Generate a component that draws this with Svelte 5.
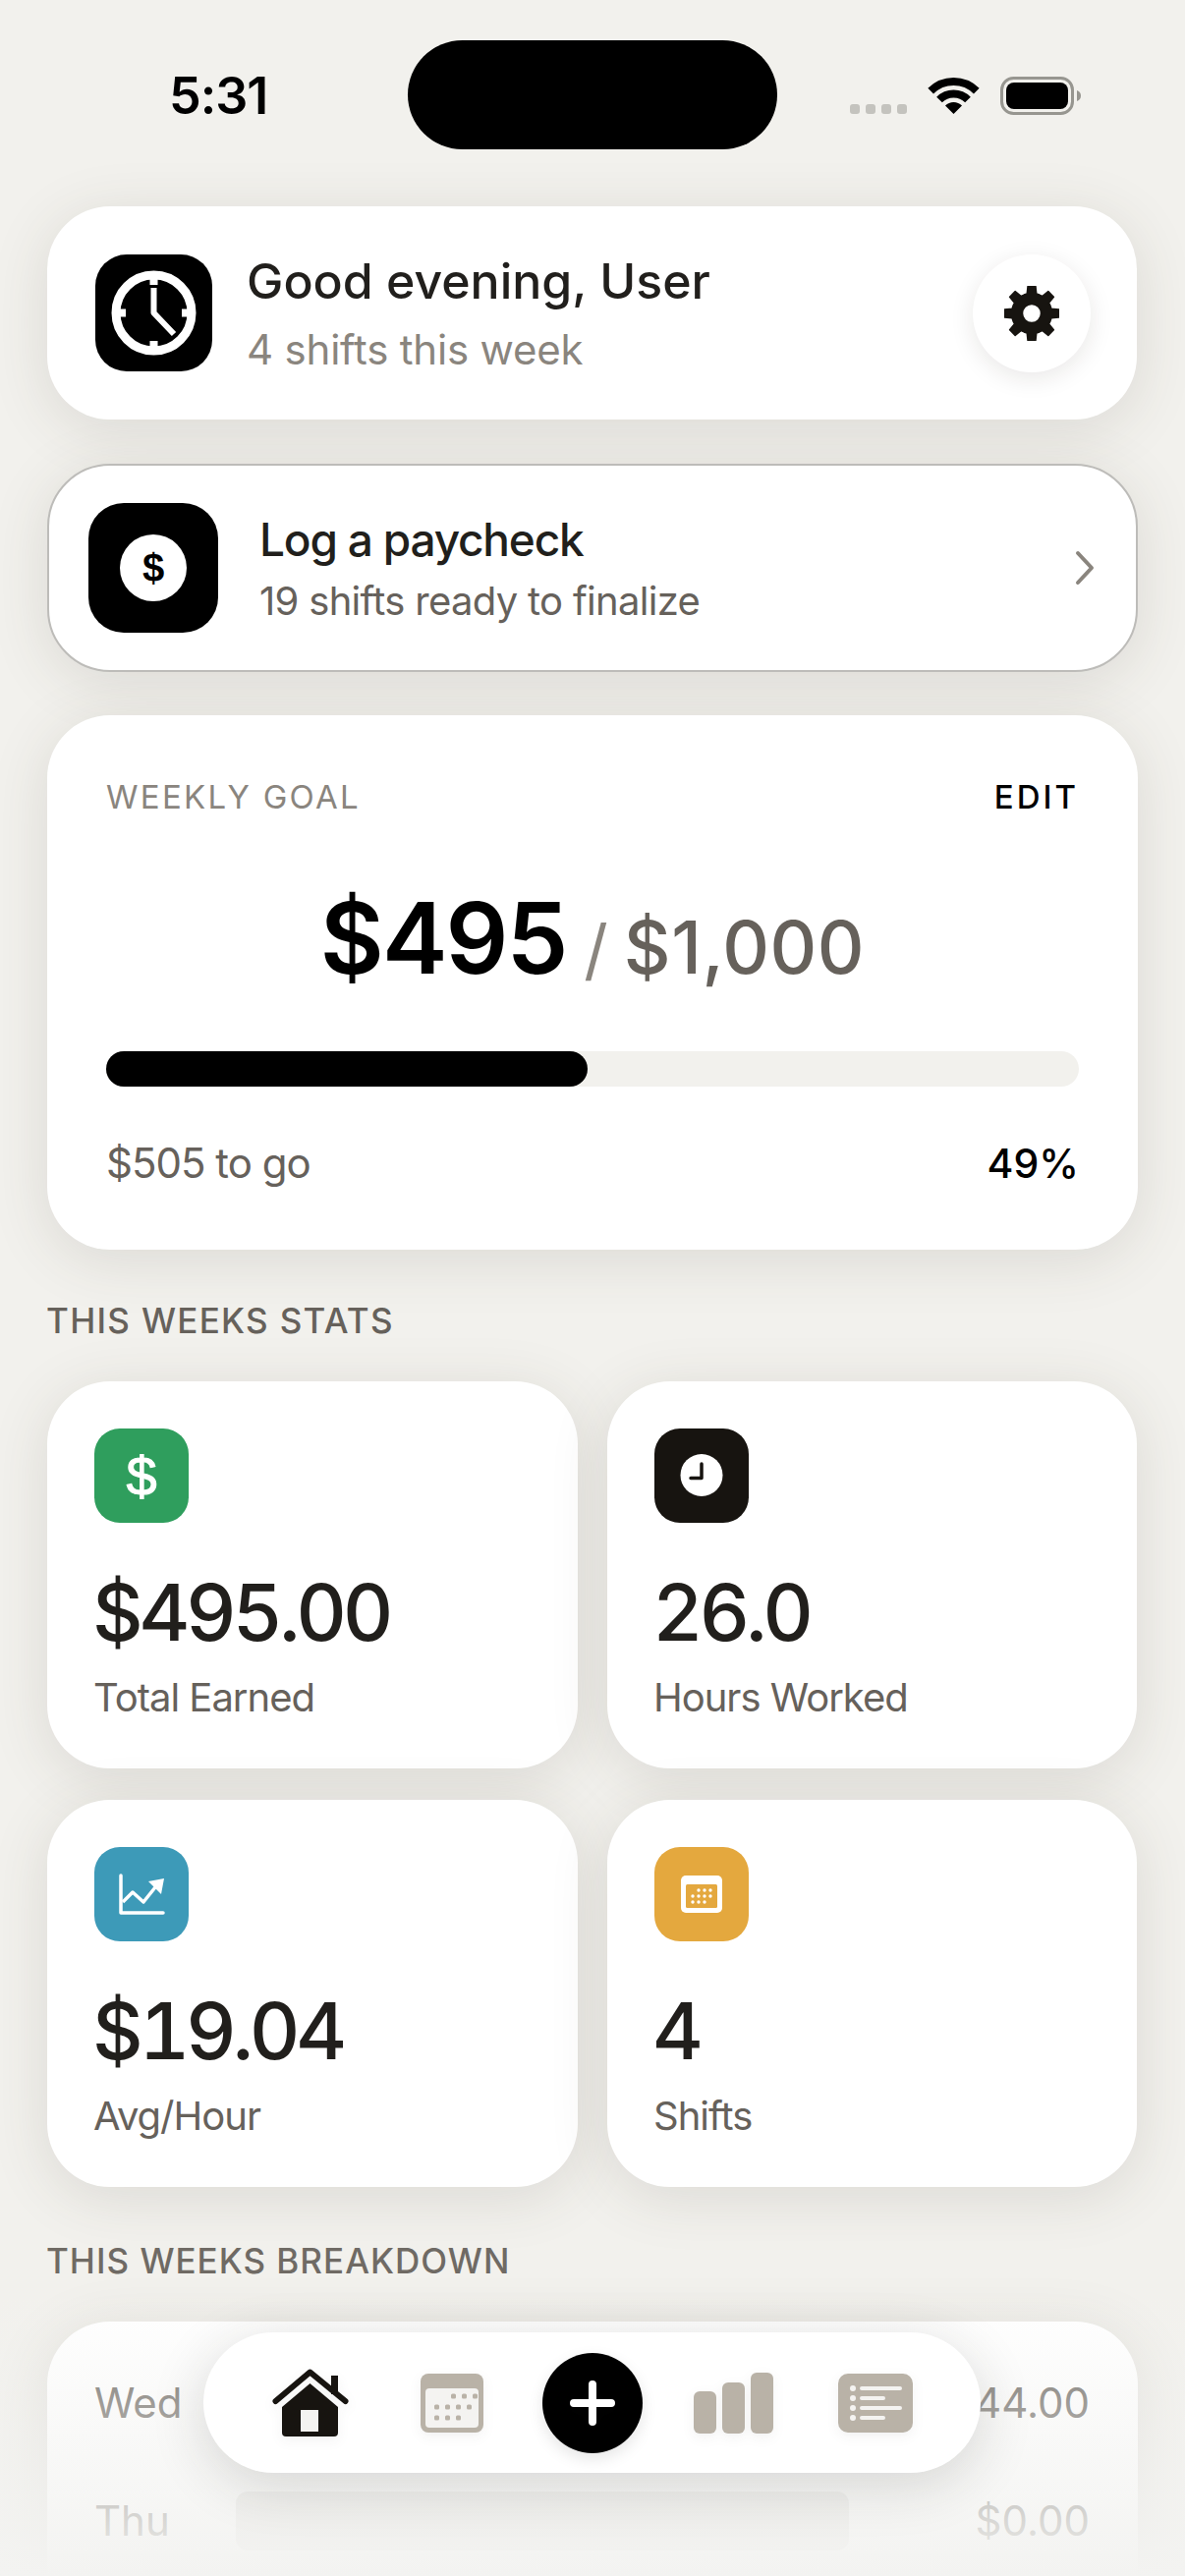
<script>
  const stats = [
    { value: '$495.00', label: 'Total Earned', color: '#2f9e5d', kind: 'dollar' },
    { value: '26.0', label: 'Hours Worked', color: '#171410', kind: 'clock' },
    { value: '$19.04', label: 'Avg/Hour', color: '#3d9ab8', kind: 'chart' },
    { value: '4', label: 'Shifts', color: '#e4a83e', kind: 'calendar' }
  ];

  const breakdown = [
    { day: 'Wed', amount: '$144.00', pct: 29 },
    { day: 'Thu', amount: '$0.00', pct: 0 }
  ];

  const goal = { earned: 495, target: 1000 };
  const progress = (goal.earned / goal.target) * 100;

  // calendar dot rows for the nav icon: [x, y]
  const navDots = [
    [33, 23], [44, 23], [55, 23],
    [16, 34], [27, 34], [38, 34], [49, 34],
    [16, 45], [27, 45], [38, 45]
  ];
  const statDots = [
    [17, 15], [23, 15], [29, 15],
    [11, 21], [17, 21], [23, 21], [29, 21],
    [11, 27], [17, 27], [23, 27]
  ];

  function gearPath(cx, cy, outer, inner, hole, teeth) {
    const step = (Math.PI * 2) / teeth;
    let d = '';
    for (let i = 0; i < teeth; i++) {
      const a = i * step - Math.PI / 2;
      const pts = [
        [inner, a - step * 0.5],
        [inner, a - step * 0.3],
        [outer, a - step * 0.18],
        [outer, a + step * 0.18],
        [inner, a + step * 0.3]
      ];
      for (const [r, t] of pts) {
        d += `${d ? 'L' : 'M'}${(cx + r * Math.cos(t)).toFixed(2)} ${(cy + r * Math.sin(t)).toFixed(2)}`;
      }
    }
    d += `Z M${cx + hole} ${cy} A${hole} ${hole} 0 1 0 ${cx - hole} ${cy} A${hole} ${hole} 0 1 0 ${cx + hole} ${cy}Z`;
    return d;
  }
</script>

<div class="screen">
  <div class="status">
    <span class="time">5:31</span>
    <div class="island"></div>
    <svg class="status-icons" width="236" height="40" viewBox="0 0 236 40">
      <rect x="0" y="28" width="10" height="10" rx="3" fill="#c4c3be" />
      <rect x="16" y="28" width="10" height="10" rx="3" fill="#c4c3be" />
      <rect x="32" y="28" width="10" height="10" rx="3" fill="#c4c3be" />
      <rect x="48" y="28" width="10" height="10" rx="3" fill="#c4c3be" />
      <path d="M82.2 14.7A33 33 0 0 1 128.8 14.7" fill="none" stroke="#000" stroke-width="8" />
      <path d="M91 23.5A20.5 20.5 0 0 1 120 23.5" fill="none" stroke="#000" stroke-width="8" />
      <path d="M105.500 38L97 29.500A12 12 0 0 1 114 29.500Z" fill="#000" />
      <rect x="154.500" y="1.500" width="72" height="36" rx="12" fill="none" stroke="#979690" stroke-width="3" />
      <rect x="159" y="6" width="63" height="27" rx="8" fill="#000" />
      <path d="M231 14C234 15 235 17 235 19.500C235 22 234 24 231 25Z" fill="#979690" />
    </svg>
  </div>

  <main class="content">
    <section class="card header-card">
      <div class="app-icon">
        <svg width="119" height="119" viewBox="0 0 119 119" fill="none" stroke="#fff">
          <circle cx="59.500" cy="59.500" r="38.500" stroke-width="9" />
          <path d="M59.500 22V31M59.500 88V97M22 59.500H31M88 59.500H97" stroke-width="8" />
          <path d="M59.500 34V59.500L80 81" stroke-width="6" stroke-linejoin="round" />
        </svg>
      </div>
      <div class="header-text">
        <div class="greeting">Good evening, User</div>
        <div class="subtitle">4 shifts this week</div>
      </div>
      <button class="gear-btn" aria-label="Settings">
        <svg width="56" height="56" viewBox="0 0 56 56">
          <path d={gearPath(28, 28, 28, 20.5, 9.5, 8)} fill="#171410" fill-rule="evenodd" stroke="#171410" stroke-width="1.500" stroke-linejoin="round" />
        </svg>
      </button>
    </section>

    <section class="card paycheck-card">
      <div class="pay-icon">
        <div class="pay-coin">$</div>
      </div>
      <div class="pay-text">
        <div class="pay-title">Log a paycheck</div>
        <div class="pay-sub">19 shifts ready to finalize</div>
      </div>
      <svg class="chevron" width="20" height="36" viewBox="0 0 20 36" fill="none">
        <path d="M3 3L17 18L3 33" stroke="#8a857e" stroke-width="4" stroke-linecap="round" stroke-linejoin="round" />
      </svg>
    </section>

    <section class="card goal-card">
      <div class="goal-head">
        <span class="goal-label">WEEKLY GOAL</span>
        <span class="goal-edit">EDIT</span>
      </div>
      <div class="goal-amount">
        <span class="earned">$495</span>
        <span class="slash">/</span>
        <span class="target">$1,000</span>
      </div>
      <div class="track">
        <div class="fill" style="width: {progress.toFixed(1)}%"></div>
      </div>
      <div class="goal-foot">
        <span class="to-go">$505 to go</span>
        <span class="pct">49%</span>
      </div>
    </section>

    <h2 class="section-label">THIS WEEKS STATS</h2>

    <section class="stats-grid">
      {#each stats as stat}
        <div class="card stat-card">
          <div class="stat-icon" style="background-color: {stat.color}">
            {#if stat.kind === 'dollar'}
              <span class="stat-dollar">$</span>
            {:else if stat.kind === 'clock'}
              <svg width="96" height="96" viewBox="0 0 96 96">
                <circle cx="48" cy="47.500" r="21.500" fill="#fff" />
                <path d="M48 36V50.500H37" fill="none" stroke="#171410" stroke-width="3.500" stroke-linecap="round" stroke-linejoin="round" />
              </svg>
            {:else if stat.kind === 'chart'}
              <svg width="96" height="96" viewBox="0 0 96 96">
                <path d="M27 29V67H70" fill="none" stroke="#fff" stroke-width="3.500" stroke-linecap="round" stroke-linejoin="round" />
                <path d="M29 56L39 46L50 56L62 41" fill="none" stroke="#fff" stroke-width="3.500" stroke-linejoin="round" />
                <path d="M55 35L71 32L68 48Z" fill="#fff" />
              </svg>
            {:else}
              <svg width="96" height="96" viewBox="0 0 96 96">
                <rect x="27" y="29" width="42" height="38" rx="5" fill="#fff" />
                <rect x="32" y="38" width="32" height="24" rx="1.500" fill="#e4a83e" />
                {#each statDots as [x, y]}
                  <circle cx={x + 28} cy={y + 29} r="1.700" fill="#fff" />
                {/each}
              </svg>
            {/if}
          </div>
          <div class="stat-value">{stat.value}</div>
          <div class="stat-label">{stat.label}</div>
        </div>
      {/each}
    </section>

    <h2 class="section-label breakdown-label">THIS WEEKS BREAKDOWN</h2>

    <section class="card breakdown-card">
      {#each breakdown as row}
        <div class="breakdown-row">
          <span class="day">{row.day}</span>
          <div class="day-bar">
            <div class="day-fill" style="width: {row.pct}%"></div>
          </div>
          <span class="amount">{row.amount}</span>
        </div>
      {/each}
    </section>
  </main>

  <div class="fade"></div>

  <nav class="tabbar">
    <div class="tab">
      <svg width="78" height="70" viewBox="0 0 78 70">
        <path d="M60 7H67V26H60Z" fill="#171410" />
        <path d="M3.500 33L38.500 3.500L74.500 33" fill="none" stroke="#171410" stroke-width="6" stroke-linecap="round" stroke-linejoin="round" />
        <path d="M38.500 15L67 39V65A4 4 0 0 1 63 69H14A4 4 0 0 1 10 65V39Z" fill="#171410" />
        <rect x="29" y="42" width="18" height="22" fill="#f4f3f1" />
      </svg>
    </div>
    <div class="tab">
      <svg width="64" height="60" viewBox="0 0 64 60">
        <rect width="64" height="60" rx="8" fill="#b9b2a7" />
        <rect x="5" y="15" width="54" height="40" rx="4" fill="#f4f3f1" />
        {#each navDots as [x, y]}
          <rect x={x - 2} y={y - 2.500} width="5" height="5" rx="1.500" fill="#b9b2a7" />
        {/each}
      </svg>
    </div>
    <div class="tab">
      <button class="add-btn" aria-label="Add">
        <svg width="46" height="46" viewBox="0 0 46 46">
          <path d="M23 4V42M4 23H42" stroke="#fff" stroke-width="8" stroke-linecap="round" />
        </svg>
      </button>
    </div>
    <div class="tab">
      <svg width="82" height="62" viewBox="0 0 82 62">
        <rect x="0" y="19" width="23" height="43" rx="6" fill="#b9b2a7" />
        <rect x="29" y="10" width="23" height="52" rx="6" fill="#b9b2a7" />
        <rect x="58" y="0" width="23" height="62" rx="6" fill="#b9b2a7" />
      </svg>
    </div>
    <div class="tab">
      <svg width="76" height="60" viewBox="0 0 76 60">
        <rect width="76" height="60" rx="10" fill="#b9b2a7" />
        <g fill="#f4f3f1">
          <circle cx="15" cy="15" r="3" />
          <circle cx="15" cy="25" r="3" />
          <circle cx="15" cy="35" r="3" />
          <circle cx="15" cy="45" r="3" />
        </g>
        <path d="M24 15H63M24 25H46M24 35H63M24 45H46" stroke="#f4f3f1" stroke-width="4" stroke-linecap="round" />
      </svg>
    </div>
  </nav>
</div>

<style>
  :global(body) {
    margin: 0;
    background: #f2f1ed;
  }

  .screen {
    position: relative;
    width: 1206px;
    height: 2622px;
    overflow: hidden;
    background: #f2f1ed;
    font-family: Inter, "Noto Sans", sans-serif;
  }

  .status {
    display: flex;
    align-items: flex-start;
    height: 210px;
    padding-left: 172px;
    box-sizing: border-box;
  }

  .time {
    width: 243px;
    margin-top: 68px;
    font-size: 52px;
    line-height: 60px;
    font-weight: 600;
    letter-spacing: -1px;
    color: #000;
  }

  .island {
    width: 376px;
    height: 111px;
    margin-top: 41px;
    border-radius: 56px;
    background: #000;
  }

  .status-icons {
    margin: 78px 0 0 74px;
  }

  .content {
    padding: 0 48px;
  }

  .card {
    background: #fff;
    border-radius: 64px;
    box-shadow: 0 10px 60px rgba(70, 60, 45, 0.13);
    box-sizing: border-box;
  }

  .header-card {
    display: flex;
    align-items: center;
    height: 217px;
    padding: 0 47px 0 49px;
    margin-right: 1px;
  }

  .app-icon {
    width: 119px;
    height: 119px;
    border-radius: 32px;
    background: #000;
    flex-shrink: 0;
  }

  .app-icon svg {
    display: block;
  }

  .header-text {
    flex: 1;
    margin-left: 35px;
  }

  .greeting {
    margin-top: -1px;
    font-size: 50px;
    line-height: 60px;
    font-weight: 500;
    color: #211f1c;
  }

  .subtitle {
    margin-top: 15px;
    font-size: 42px;
    line-height: 50px;
    color: #8a857e;
    letter-spacing: -0.2px;
  }

  .gear-btn {
    display: flex;
    align-items: center;
    justify-content: center;
    width: 120px;
    height: 120px;
    padding: 0;
    border: none;
    border-radius: 50%;
    background: #fff;
    box-shadow: 0 6px 24px rgba(40, 30, 20, 0.1);
  }

  .paycheck-card {
    display: flex;
    align-items: center;
    height: 212px;
    margin-top: 45px;
    padding: 0 42px 0 40px;
    border: 2px solid #bdbcb9;
    border-radius: 64px;
  }

  .pay-icon {
    display: flex;
    align-items: center;
    justify-content: center;
    width: 132px;
    height: 132px;
    border-radius: 36px;
    background: #000;
    flex-shrink: 0;
  }

  .pay-coin {
    display: flex;
    align-items: center;
    justify-content: center;
    width: 68px;
    height: 68px;
    border-radius: 50%;
    background: #fff;
    color: #000;
    font-family: "Liberation Sans", sans-serif;
    font-weight: 700;
    font-size: 40px;
  }

  .pay-text {
    flex: 1;
    margin-left: 42px;
  }

  .pay-title {
    font-size: 46px;
    line-height: 56px;
    font-weight: 500;
    letter-spacing: -1.2px;
    color: #211f1c;
  }

  .pay-sub {
    margin-top: 11px;
    font-size: 40px;
    line-height: 48px;
    letter-spacing: -0.7px;
    color: #66615b;
  }

  .goal-card {
    height: 544px;
    margin-top: 44px;
    padding: 63px 60px;
  }

  .goal-head {
    display: flex;
    justify-content: space-between;
    font-size: 33px;
    line-height: 40px;
    letter-spacing: 2.300px;
  }

  .goal-label {
    color: #8a857e;
  }

  .goal-edit {
    color: #000;
    font-weight: 500;
    letter-spacing: 3px;
  }

  .goal-amount {
    display: flex;
    align-items: baseline;
    justify-content: center;
    height: 110px;
    margin-top: 69px;
    line-height: 110px;
  }

  .earned {
    font-size: 100px;
    font-weight: 600;
    letter-spacing: -2px;
    color: #000;
  }

  .slash {
    margin-left: 18px;
    font-size: 68px;
    color: #8a857e;
  }

  .target {
    margin-left: 16px;
    font-size: 74px;
    font-weight: 500;
    letter-spacing: 0.5px;
    color: #66615b;
  }

  .track {
    height: 36px;
    margin-top: 60px;
    border-radius: 18px;
    background: #f2f1ed;
  }

  .fill {
    height: 100%;
    border-radius: 18px;
    background: #000;
  }

  .goal-foot {
    display: flex;
    justify-content: space-between;
    margin-top: 53px;
    line-height: 50px;
  }

  .to-go {
    font-size: 42px;
    letter-spacing: -1px;
    color: #66615b;
  }

  .pct {
    font-size: 41px;
    font-weight: 500;
    color: #000;
  }

  .section-label {
    margin: 51px 0 41px -1px;
    font-size: 35px;
    line-height: 42px;
    font-weight: 500;
    letter-spacing: 1.300px;
    color: #66615b;
  }

  .breakdown-label {
    margin-top: 54px;
    letter-spacing: 1px;
    color: #6f6a64;
  }

  .stats-grid {
    display: grid;
    grid-template-columns: 540px 539px;
    gap: 32px 30px;
  }

  .stat-card {
    height: 394px;
    padding: 48px;
  }

  .stat-icon {
    display: flex;
    align-items: center;
    justify-content: center;
    width: 96px;
    height: 96px;
    border-radius: 26px;
  }

  .stat-dollar {
    font-family: "Liberation Sans", sans-serif;
    font-size: 56px;
    -webkit-text-stroke: 1px #fff;
    color: #fff;
  }

  .stat-value {
    margin: 51px 0 0 -2px;
    font-size: 80px;
    line-height: 80px;
    font-weight: 500;
    font-variant-numeric: tabular-nums;
    letter-spacing: -4.3px;
    color: #211f1c;
  }

  .stat-label {
    margin: 23px 0 0 -1px;
    font-size: 40px;
    line-height: 48px;
    letter-spacing: -1px;
    color: #66615b;
  }

  .breakdown-card {
    height: 500px;
    padding: 53px 49px 53px 48px;
  }

  .breakdown-row {
    display: grid;
    grid-template-columns: 144px 1fr 245px;
    align-items: center;
    height: 60px;
    margin-bottom: 60px;
    font-size: 42px;
    line-height: 60px;
    color: #66615b;
  }

  .amount {
    text-align: right;
  }

  .day-bar {
    height: 60px;
    border-radius: 12px;
    background: #e4e3e0;
  }

  .day-fill {
    height: 100%;
    border-radius: 12px;
    background: #3d9ab8;
  }

  .fade {
    position: absolute;
    left: 0;
    right: 0;
    top: 2330px;
    bottom: 0;
    background: linear-gradient(to bottom, rgba(243, 243, 241, 0), rgba(243, 243, 241, 1));
  }

  .tabbar {
    position: absolute;
    left: 207px;
    bottom: 105px;
    display: flex;
    width: 791px;
    height: 143px;
    padding: 0 35px 0 37px;
    box-sizing: border-box;
    border-radius: 72px;
    background: #fff;
    box-shadow: 0 12px 56px rgba(40, 35, 30, 0.16);
  }

  .tab {
    display: flex;
    align-items: center;
    justify-content: center;
    width: 144px;
  }

  .tab svg {
    display: block;
    filter: drop-shadow(0 4px 6px rgba(40, 35, 30, 0.06));
  }

  .add-btn {
    display: flex;
    align-items: center;
    justify-content: center;
    width: 102px;
    height: 102px;
    padding: 0;
    border: none;
    border-radius: 50%;
    background: #000;
    box-shadow: 0 6px 16px rgba(0, 0, 0, 0.1);
  }
</style>
